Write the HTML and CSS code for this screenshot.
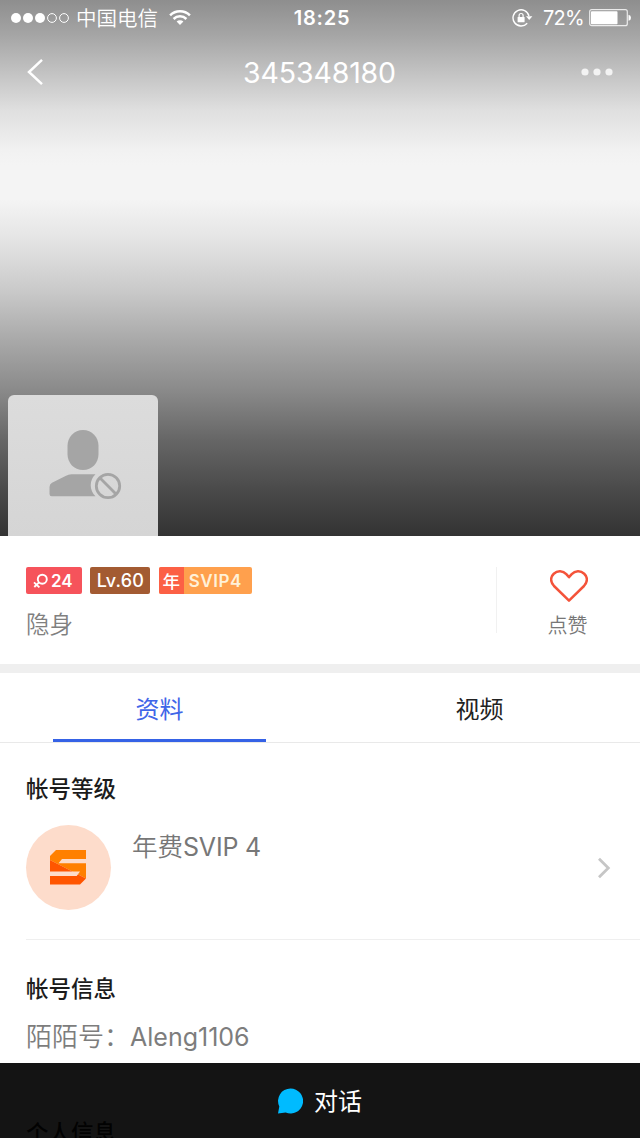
FILE: index.html
```html
<!DOCTYPE html>
<html lang="zh-CN">
<head>
<meta charset="utf-8">
<title>345348180</title>
<link rel="stylesheet" href="styles.css">
</head>
<body>
<div class="screen">
  <header class="cover">
    <div class="status">
      <div class="status-left">
        <svg class="signal" width="58" height="12" viewBox="0 0 58 12"><g fill="#fff"><circle cx="5" cy="6" r="5"/><circle cx="17" cy="6" r="5"/><circle cx="29" cy="6" r="5"/></g><g fill="none" stroke="#fff"><circle cx="41" cy="6" r="4.4"/><circle cx="53" cy="6" r="4.4"/></g></svg>
        <span class="carrier">中国电信</span>
        <svg class="wifi" width="22" height="17" viewBox="0 0 22 17"><g fill="none" stroke="#fff" stroke-width="2.5"><path d="M1.1 6.4a14 14 0 0 1 19.8 0"/><path d="M4.6 10a9 9 0 0 1 12.8 0"/></g><path d="M11 16 7.6 12.6a4.8 4.8 0 0 1 6.8 0Z" fill="#fff"/></svg>
      </div>
      <span class="clock">18:25</span>
      <div class="status-right">
        <svg class="lock" width="21" height="18" viewBox="0 0 21 18"><path d="M17 7A8.100 8.100 0 1 0 15.200 14.200" fill="none" stroke="#fff" stroke-width="1.4"/><path d="M14 7.300h6.400l-3.200 3.600Z" fill="#fff"/><rect x="5.600" y="7.900" width="7" height="5.400" rx=".6" fill="#fff"/><path d="M7.100 8.200V6.500a2 2 0 0 1 4 0v1.700" fill="none" stroke="#fff" stroke-width="1.200"/></svg>
        <span class="percent">72%</span>
        <svg class="battery" width="43" height="18" viewBox="0 0 43 18"><rect x=".7" y=".7" width="37.600" height="16" rx="2" fill="none" stroke="#fff" stroke-opacity=".8" stroke-width="1.200"/><rect x="2" y="2.200" width="26.500" height="13" rx=".8" fill="#fff"/><path d="M39.500 5.800q2.500.5 2.500 3t-2.500 3Z" fill="#fff"/></svg>
      </div>
    </div>
    <nav class="navbar">
      <svg class="back" width="18" height="28" viewBox="0 0 18 28"><path d="M16 1.800 3 14 16 26.200" fill="none" stroke="#fff" stroke-width="2.500"/></svg>
      <h1 class="title">345348180</h1>
      <svg class="more" width="32" height="8" viewBox="0 0 32 8"><g fill="#fff" fill-opacity=".8"><circle cx="4" cy="4" r="3.600"/><circle cx="16" cy="4" r="3.600"/><circle cx="28" cy="4" r="3.600"/></g></svg>
    </nav>
    <div class="avatar">
      <svg width="150" height="142" viewBox="0 0 150 142"><g fill="#a5a5a5"><path d="M59.500 51C59.500 42 66 35 75 35S90.500 42 90.500 51V59C90.500 68 84 75 75 75S59.500 68 59.500 59Z"/><path d="M41.500 92q0-3 2.500-4.300L57.500 81q3-1.700 6-1.700H87.500a15 15 0 0 0 0 22H44Q41.500 101.500 41.500 99Z"/></g><g fill="none" stroke="#a5a5a5" stroke-width="2.800"><circle cx="100" cy="91" r="11.700"/><path d="m91.800 82.800 16.400 16.400"/></g></svg>
    </div>
  </header>

  <section class="summary">
    <div class="identity">
      <div class="badges">
        <span class="badge age"><svg width="15" height="16" viewBox="0 0 15 16"><g fill="none" stroke="#fff" stroke-width="1.900"><circle cx="9.300" cy="6.200" r="4.500"/><path d="M6 9.400 1.300 14M1 9.400l5.400 5"/></g></svg><span class="age-num">24</span></span>
        <span class="badge level">Lv.60</span>
        <span class="badge svip"><span class="year">年</span><span class="vip">SVIP4</span></span>
      </div>
      <div class="presence">隐身</div>
    </div>
    <div class="like">
      <svg width="38" height="34" viewBox="0 0 38 34"><path d="M19 31.700 4 17C-.2 12.500.6 7.600 3.800 4.700 7.500 1.400 12.900 1.600 16.300 5.200L19 8.200 21.700 5.200C25.100 1.600 30.500 1.400 34.200 4.700 37.400 7.600 38.200 12.500 34 17Z" fill="none" stroke="#f4533a" stroke-width="2.500" stroke-linejoin="round"/></svg>
      <span class="like-label">点赞</span>
    </div>
  </section>

  <div class="tabs">
    <div class="tab active"><span class="tab-label">资料</span></div>
    <div class="tab"><span class="tab-label">视频</span></div>
  </div>

  <section class="rank">
    <h2 class="heading">帐号等级</h2>
    <div class="rank-row">
      <div class="rank-icon"><svg width="36" height="35" viewBox="0 0 36 35"><path d="M6 0H36V28.500L0 10V6Z" fill="#ff8000"/><path d="M0 10 36 28.500 30 34.500H0Z" fill="#ff5500"/><path d="M12 9H36V13.300H8.500ZM0 21.600H30L26.700 26H0Z" fill="#fddccb"/></svg></div>
      <span class="rank-name">年费<span class="rank-level">SVIP 4</span></span>
      <svg class="chevron" width="14" height="22" viewBox="0 0 14 22"><path d="m2 1.800 9.300 9.200L2 20.200" fill="none" stroke="#c6c6c6" stroke-width="2.800"/></svg>
    </div>
  </section>

  <section class="info">
    <h2 class="heading">帐号信息</h2>
    <div class="info-row"><span class="info-key">陌陌号：</span><span class="info-value">Aleng1106</span></div>
    <h2 class="heading personal">个人信息</h2>
  </section>

  <div class="chatbar">
    <svg width="26" height="26" viewBox="0 0 26 26"><path d="M13.500.5a12.500 12.500 0 1 1-4.800 24L1 25.500 2.300 18.500A12.500 12.500 0 0 1 13.500.5Z" fill="#00bbff"/></svg>
    <span class="chat-label">对话</span>
  </div>
</div>
</body>
</html>
```

FILE: styles.css
```css
* { box-sizing: border-box; }
body { margin: 0; font-family: Inter, "Noto Sans CJK SC", sans-serif; background: #fff; }
svg { display: block; flex: none; }
h1, h2 { margin: 0; font-weight: 400; }
.screen { position: relative; width: 640px; height: 1138px; overflow: hidden; display: flex; flex-direction: column; background: #fff; }

.cover {
  height: 536px; flex: none; display: flex; flex-direction: column; color: #fff;
  background: linear-gradient(#8e8e8e 0, #a5a5a5 35px, #c2c2c2 72px, #dfdfdf 110px, #f1f1f1 150px, #f4f4f4 165px, #f4f4f4 200px, #e5e5e5 238px, #cacaca 290px, #a9a9a9 340px, #8a8a8a 390px, #666 440px, #474747 495px, #333 536px);
}
.status { height: 36px; display: grid; grid-template-columns: 1fr auto 1fr; align-items: center; padding: 0 11px; }
.status-left, .status-right { display: flex; align-items: center; }
.status-right { justify-content: flex-end; }
.carrier { margin: 2px 0 0 7px; font-size: 20.500px; line-height: 34px; font-weight: 350; }
.wifi { margin: -2px 0 0 11px; }
.clock { margin-left: 4px; font-size: 20px; font-weight: 600; letter-spacing: .8px; }
.lock { margin-right: 10px; }
.percent { font-size: 20px; margin-right: 5px; letter-spacing: -.7px; }
.battery { margin-right: -3px; }
.navbar { height: 72px; display: grid; grid-template-columns: 1fr auto 1fr; align-items: center; padding: 0 27px 0 26px; }
.title { font-size: 28.500px; font-weight: 400; letter-spacing: -.15px; }
.more { justify-self: end; }
.avatar { margin: auto 0 0 8px; width: 150px; height: 141px; border-radius: 6px 6px 0 0; background: linear-gradient(#dcdcdc, #d5d5d5); }

.summary { height: 137px; flex: none; display: flex; justify-content: space-between; padding-top: 31px; border-bottom: 9px solid #efefef; }
.identity { padding-left: 26px; }
.badges { display: flex; gap: 8.400px; }
.badge { height: 27px; border-radius: 2px; display: flex; align-items: center; color: #fff; font-size: 18px; line-height: 27px; font-weight: 500; overflow: hidden; }
.age { width: 56px; background: #f6535b; padding-left: 7px; gap: 3px; }
.age-num { font-size: 17px; font-weight: 600; padding-top: 1px; }
.level { width: 60px; background: #a35b32; justify-content: center; line-height: 25px; padding-bottom: 1px; letter-spacing: .2px; }
.svip { width: 93px; background: #ffa04d; }
.year { width: 25px; background: #fc6045; text-align: center; font-size: 17.500px; font-weight: 500; padding-top: 1px; }
.vip { width: 68px; padding: 2px 5px 0 0; text-align: center; font-size: 17px; font-weight: 600; letter-spacing: .5px; color: #fff1d8; }
.presence { margin-top: 14px; font-size: 23.500px; line-height: 34px; color: #808080; font-weight: 350; }
.like { width: 144px; height: 66px; border-left: 1px solid #f1f1f1; display: flex; flex-direction: column; align-items: center; padding-top: 2px; }
.like-label { margin: 9px 2px 0 0; font-size: 20px; line-height: 28px; color: #777; font-weight: 350; }

.tabs { height: 70px; flex: none; display: flex; border-bottom: 1px solid #e9e9e9; }
.tab { flex: 1; display: flex; flex-direction: column; align-items: center; font-size: 24px; line-height: 34px; color: #222; padding-top: 20px; }
.tab-label { margin-right: 1px; }
.active { color: #3f66e8; }
.active::after { content: ""; width: 213px; height: 3px; margin: 12px 1px 0 0; background: #3562e6; }

.rank { margin-left: 26px; height: 197px; flex: none; border-bottom: 1px solid #efefef; padding-top: 30px; }
.heading { font-size: 22.500px; line-height: 32px; color: #1c1c1c; font-weight: 500; }
.rank-row { display: flex; align-items: center; height: 85px; margin-top: 20px; padding-right: 29px; }
.rank-icon { width: 85px; height: 85px; border-radius: 50%; background: #fddccb; display: flex; align-items: center; justify-content: center; padding-right: 1px; }
.rank-name { align-self: flex-start; margin: 4px 0 0 21px; font-size: 25.500px; line-height: 36px; font-weight: 350; color: #777; }
.rank-level { font-size: 25px; font-weight: 400; letter-spacing: -.2px; }
.chevron { margin-left: auto; }

.info { margin-left: 26px; padding-top: 33px; }
.info-row { margin-top: 14px; display: flex; font-size: 26px; line-height: 36px; color: #7d7d7d; font-weight: 350; }
.info-value { font-size: 25px; font-weight: 400; }
.personal { margin-top: 62px; }

.chatbar { position: absolute; left: 0; right: 0; bottom: 0; height: 75px; background: rgba(0, 0, 0, .92); display: flex; align-items: center; justify-content: center; gap: 11px; padding: 1px 1px 0 0; color: #fff; }
.chat-label { font-size: 24px; line-height: 34px; padding-top: 1px; }
```
